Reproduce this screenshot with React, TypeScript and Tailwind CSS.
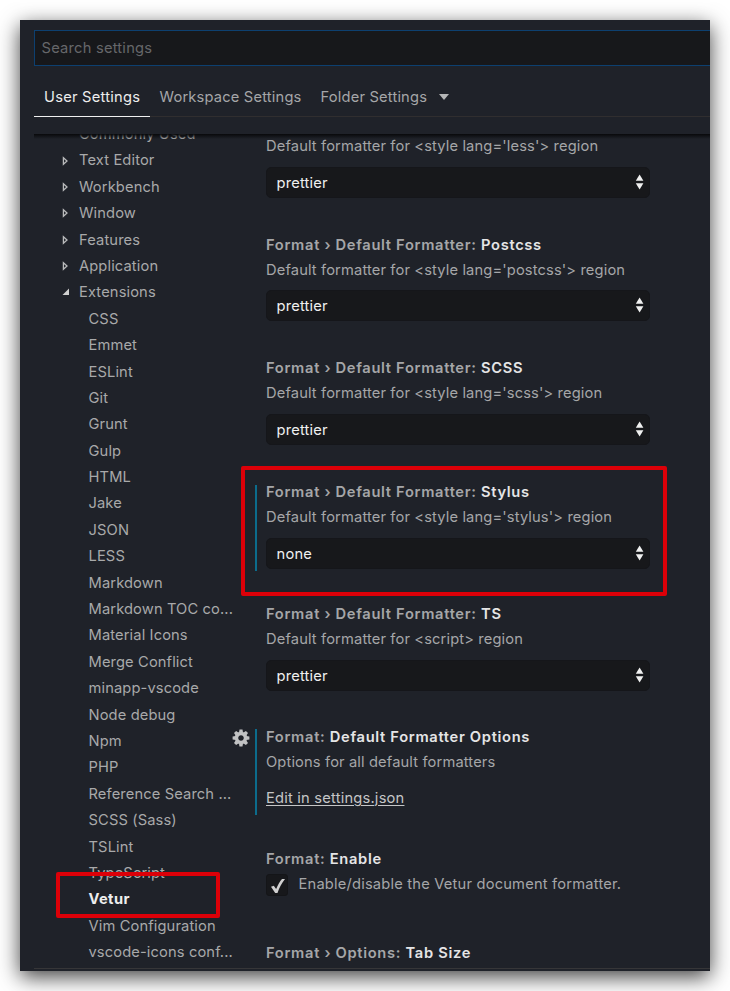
import React from "react";

type Setting = {
  scope: string;
  name: string;
  text: string;
  height: string;
  value?: string;
  link?: string;
  check?: boolean;
  bar?: string;
  gear?: boolean;
};

const groups = ["Text Editor", "Workbench", "Window", "Features", "Application"];

const extensions = [
  "CSS", "Emmet", "ESLint", "Git", "Grunt", "Gulp", "HTML", "Jake", "JSON", "LESS",
  "Markdown", "Markdown TOC co...", "Material Icons", "Merge Conflict", "minapp-vscode",
  "Node debug", "Npm", "PHP", "Reference Search ...", "SCSS (Sass)", "TSLint",
  "TypeScript", "Vetur", "Vim Configuration", "vscode-icons conf...",
];

const settings: Setting[] = [
  { scope: "", name: "", text: "Default formatter for <style lang='less'> region", value: "prettier", height: "h-[123.5px]" },
  { scope: "Format › Default Formatter:", name: "Postcss", text: "Default formatter for <style lang='postcss'> region", value: "prettier", height: "h-[123.5px]" },
  { scope: "Format › Default Formatter:", name: "SCSS", text: "Default formatter for <style lang='scss'> region", value: "prettier", height: "h-[124px]" },
  { scope: "Format › Default Formatter:", name: "Stylus", text: "Default formatter for <style lang='stylus'> region", value: "none", bar: "top-[3px]", height: "h-[122px]" },
  { scope: "Format › Default Formatter:", name: "TS", text: "Default formatter for <script> region", value: "prettier", height: "h-[123px]" },
  { scope: "Format:", name: "Default Formatter Options", text: "Options for all default formatters", link: "Edit in settings.json", bar: "top-[2px]", gear: true, height: "h-[122px]" },
  { scope: "Format:", name: "Enable", text: "Enable/disable the Vetur document formatter.", check: true, height: "h-[94px]" },
  { scope: "Format › Options:", name: "Tab Size", text: "", height: "h-[25px]" },
];

function Gear() {
  const teeth = [0, 45, 90, 135, 180, 225, 270, 315];
  return (
    <svg className="absolute left-[-23px] top-[2px] size-[18px]" viewBox="-9 -9 18 18" fill="#c1c2c3">
      {teeth.map((a) => (
        <path key={a} d="M-2.1 -5.2L-1.5 -8.4H1.5L2.1 -5.2Z" transform={`rotate(${a})`} />
      ))}
      <circle r="4.5" fill="none" stroke="#c1c2c3" strokeWidth="3.4" />
    </svg>
  );
}

function Select({ value }: { value: string }) {
  return (
    <div className="mt-[10.9px] flex h-[31px] w-[384px] items-center justify-between rounded-[5px] border border-[#15161a] bg-[#17181b] pr-[4.5px] pl-[9.5px] text-[#f0f0f0]">
      <span className="pt-px tracking-[0.2px]">{value}</span>
      <svg className="mb-px h-4 w-2.5" viewBox="0.4 0 10 16" fill="#f0f0f0">
        <path d="M5 0.5L8.8 6.7H1.2Z" />
        <path d="M5 15.5L8.8 9.3H1.2Z" />
      </svg>
    </div>
  );
}

function Item({ s }: { s: Setting }) {
  return (
    <section className={`relative shrink-0 pl-[11px] ${s.height}`}>
      {s.bar && <div className={`absolute left-0 h-[86px] w-[2px] bg-[#0c6c8c] ${s.bar}`} />}
      {s.gear && <Gear />}
      <h3 className="h-5 whitespace-nowrap font-semibold leading-5 tracking-[0.68px] text-[#a5a6a8]">
        {s.scope} <span className="text-[#e5e5e6]">{s.name}</span>
      </h3>
      {s.check ? (
        <div className="mt-[5px] flex">
          <div className="flex size-[22px] items-center justify-center rounded-[3px] border border-[#141518] bg-[#17181b]">
            <svg className="ml-px mt-px size-4 shrink-0" viewBox="0 0 16 16" fill="#d0d0d0">
              <path d="M1 8.7L3.8 7.8L6.1 11.1C7.8 6.9 9.7 3.4 12 0.9L15 1C11.7 5.2 9.4 9.5 7.5 15H5.2Z" />
            </svg>
          </div>
          <p className="ml-[10.5px] leading-5 tracking-[0.19px] text-[#a5a6a8]">{s.text}</p>
        </div>
      ) : (
        <p className="mt-[5px] h-5 leading-5 tracking-[0.13px] text-[#a5a6a8]">{s.text}</p>
      )}
      {s.value && <Select value={s.value} />}
      {s.link && (
        <a className="mt-4 block leading-5 tracking-[0.2px] text-[#c5c6c7] underline decoration-1 underline-offset-2">{s.link}</a>
      )}
    </section>
  );
}

export default function App() {
  return (
    <div className="h-[991px] w-[730px] overflow-hidden bg-white p-5 font-[Inter,sans-serif] text-[14.7px]">
      <div className="relative flex h-[951px] w-[690px] flex-col bg-[#1f2229] shadow-[0_6px_20px_rgba(0,0,0,0.75)]">
        <div className="mt-[10px] ml-[14px] flex h-9 items-center border border-r-0 border-[#0d4070] bg-[#17181b] pl-[6.5px] tracking-[0.22px] text-[#66676a]">
          Search settings
        </div>
        <nav className="ml-[14px] mt-3 flex h-[39px] items-center border-b border-[#302e2f] tracking-[0.18px] text-[#a5a6a8]">
          <div className="mb-[-1px] flex h-[39px] w-[116px] items-center border-b border-[#f0f0f0] pl-[10px] tracking-[0.24px] text-[#ededed]">User Settings</div>
          <div className="ml-[9.5px] w-[161px]">Workspace Settings</div>
          <div>Folder Settings</div>
          <div className="ml-[11.5px] border-x-[5px] border-t-[6px] border-x-transparent border-t-[#b5b6b7]" />
        </nav>
        <main className="relative mt-[17px] ml-[14px] flex h-[835px] overflow-hidden border-b border-[#363638]">
          <ul className="mt-[-13px] w-[221px] shrink-0 tracking-[0.12px] text-[#a8a9aa]">
            <li className="h-[26.4px] pl-[45px] leading-[26.4px]">Commonly Used</li>
            {groups.map((g) => (
              <li key={g} className="flex h-[26.4px] items-center leading-[26.4px]">
                <svg className="ml-7 mr-[9px] h-[10px] w-2" viewBox="0 0 8 10" fill="none" stroke="#b9babb" strokeWidth="1.3">
                  <path d="M1.4 1.7V8.3L5 5Z" />
                </svg>
                {g}
              </li>
            ))}
            <li className="flex h-[26.4px] items-center leading-[26.4px]">
              <svg className="mb-0.5 ml-7 mr-[9px] h-2 w-2" viewBox="0 0 8 8" fill="#d0d0d0">
                <path d="M7 0.5V7H0.5Z" />
              </svg>
              Extensions
            </li>
            {extensions.map((e) => (
              <li
                key={e}
                className={e === "Vetur" ? "h-[26.4px] pl-[54.5px] font-bold leading-[26.4px] tracking-[0.4px] text-[#eeeeee]" : "h-[26.4px] pl-[54.5px] leading-[26.4px]"}
              >
                {e}
              </li>
            ))}
          </ul>
          <div className="mt-[-23px] flex flex-1 flex-col">
            {settings.map((s, i) => (
              <Item key={i} s={s} />
            ))}
          </div>
          <div className="absolute inset-x-0 top-0 h-[5px] bg-gradient-to-b from-[#08090b] to-transparent" />
        </main>
        <div className="absolute left-[221px] top-[446px] h-[130px] w-[426px] rounded-[2px] border-4 border-[#dc0008]" />
        <div className="absolute left-[36px] top-[852px] h-[46px] w-[164px] rounded-[2px] border-4 border-[#dc0008]" />
      </div>
    </div>
  );
}
